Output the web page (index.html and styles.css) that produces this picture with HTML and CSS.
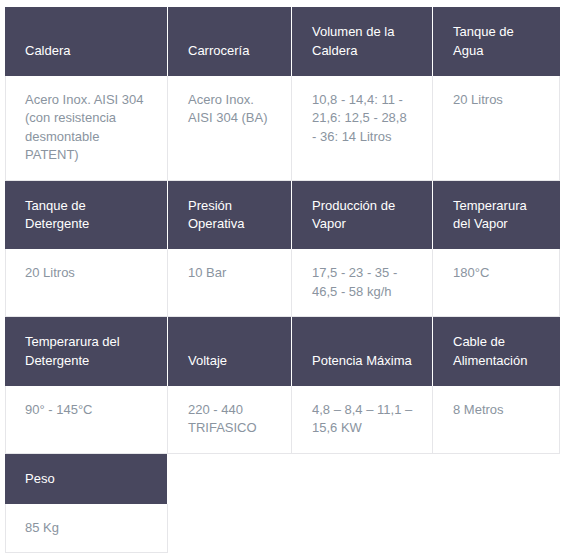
FILE: index.html
```html
<!DOCTYPE html>
<html lang="es">
<head>
<meta charset="utf-8">
<title>Especificaciones</title>
<link rel="stylesheet" href="styles.css">
</head>
<body>
<div class="specs">
  <div class="th">Caldera</div>
  <div class="th">Carrocería</div>
  <div class="th">Volumen de la Caldera</div>
  <div class="th last">Tanque de Agua</div>
  <div class="td first">Acero Inox. AISI 304 (con resistencia desmontable PATENT)</div>
  <div class="td">Acero Inox. AISI 304 (BA)</div>
  <div class="td">10,8 - 14,4: 11 - 21,6: 12,5 - 28,8 <span class="nowrap">- 36:</span> 14 Litros</div>
  <div class="td">20 Litros</div>

  <div class="th">Tanque de Detergente</div>
  <div class="th">Presión Operativa</div>
  <div class="th">Producción de Vapor</div>
  <div class="th last">Temperarura del Vapor</div>
  <div class="td first">20 Litros</div>
  <div class="td">10 Bar</div>
  <div class="td">17,5 - 23 - 35 - 46,5 - 58 kg/h</div>
  <div class="td">180°C</div>

  <div class="th">Temperarura del Detergente</div>
  <div class="th">Voltaje</div>
  <div class="th">Potencia Máxima</div>
  <div class="th last">Cable de Alimentación</div>
  <div class="td first">90° - 145°C</div>
  <div class="td">220 - 440 TRIFASICO</div>
  <div class="td">4,8 – 8,4 – 11,1 – 15,6 KW</div>
  <div class="td">8 Metros</div>

  <div class="th">Peso</div>
  <div class="td first newrow">85 Kg</div>
</div>
</body>
</html>
```
FILE: styles.css
```css
html, body {
  margin: 0;
  padding: 0;
  background: #ffffff;
}

body {
  font-family: "Liberation Sans", Arial, Helvetica, sans-serif;
  font-size: 13px;
  line-height: 18.5px;
}

.specs {
  display: grid;
  grid-template-columns: 163px 124px 141px 127px;
  margin: 7px 0 0 5px;
  width: 555px;
}

.th {
  background: #48475e;
  color: #ffffff;
  padding: 16px 20px 15.5px 20px;
  border-right: 1px solid #ffffff;
  display: flex;
  flex-direction: column;
  justify-content: flex-end;
}

.th.last {
  border-right: 0;
}

.td {
  color: #8a94a0;
  padding: 15px 14px 15px 20px;
  border-right: 1px solid #e6e6e9;
  border-bottom: 1px solid #e6e6e9;
}

.td.first {
  border-left: 1px solid #e6e6e9;
  padding-left: 19px;
}

.td.newrow {
  grid-column: 1;
}

.nowrap {
  white-space: nowrap;
}
```
